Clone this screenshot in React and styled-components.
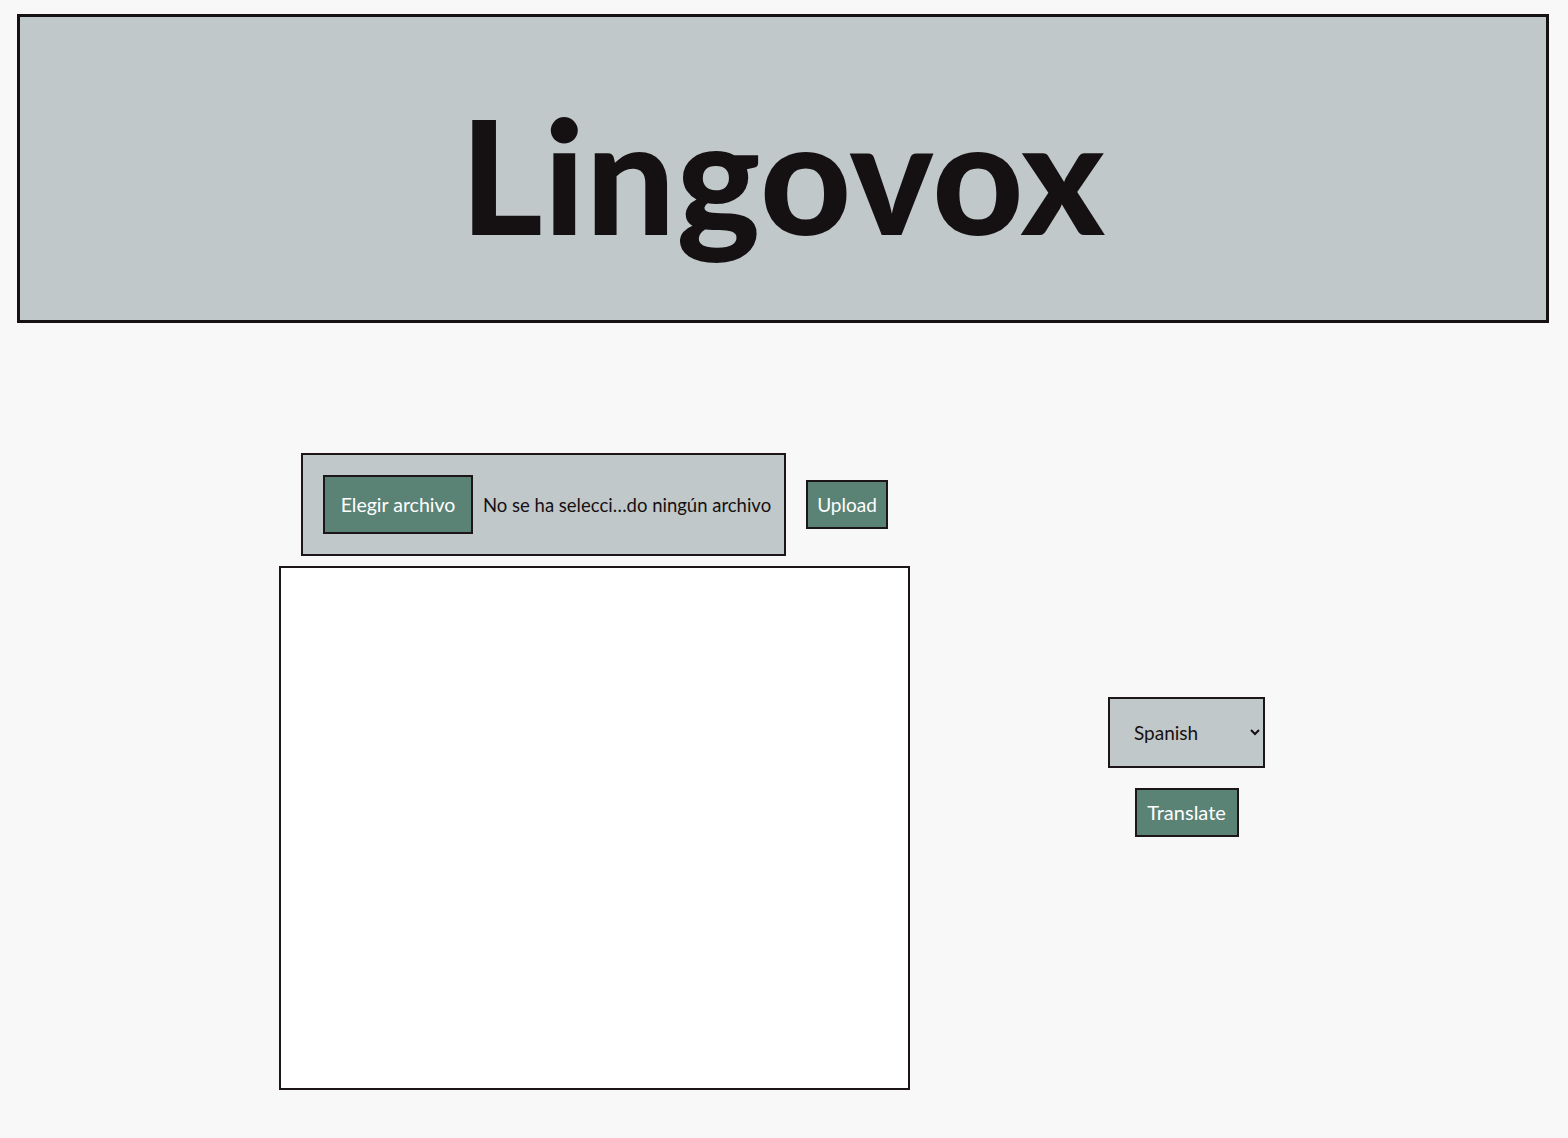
import styled, { createGlobalStyle } from "styled-components";

const GlobalStyle = createGlobalStyle`
    body{
        margin:0;
        background:#f8f8f8;
        font-family: "Comic Sans MS", "Lato", sans-serif;
        color:#151012;
    }
`;

const Header = styled.header`
    height:309px;
    box-sizing:border-box;
    margin:14px 19px 0 17px;
    border:3px solid #161113;
    background:#c1c8c9;
    display:flex;
    align-items:center;
    justify-content:center;

    h1{
        margin:10px 0 0;
        font-size:158px;
        font-weight:900;
        line-height:1;
        letter-spacing:1px;
    }
`;

const Main = styled.main`
    display:flex;
    align-items:center;
    gap:198px;
    margin-top:130px;
    padding-left:279px;
`;

const Column = styled.div`
    display:flex;
    flex-direction:column;
    align-items:center;
    gap:${props => props.gap || "10px"};
    margin-bottom:${props => props.lift || "0"};
`;

const UploadRow = styled.div`
    display:flex;
    align-items:center;
    gap:20px;
`;

const FileBox = styled.div`
    display:flex;
    align-items:center;
    gap:10px;
    width:485px;
    height:103px;
    box-sizing:border-box;
    padding:0 20px;
    border:2px solid #1c1618;
    background:#c1c8c9;
    font-size:18.5px;
`;

const Button = styled.button`
    flex-shrink:0;
    box-sizing:border-box;
    width:${props => props.w};
    height:${props => props.h};
    padding:0;
    border:2px solid #1c1618;
    background:#5a8275;
    color:#fff;
    font-family:inherit;
    font-size:${props => props.fs || "19px"};
    cursor:pointer;
`;

const FileName = styled.span`
    flex-shrink:0;
    white-space:nowrap;
`;

const TextBox = styled.textarea`
    display:block;
    width:631px;
    height:524px;
    box-sizing:border-box;
    border:2px solid #1c1618;
    background:#fff;
    resize:none;
    font-family:inherit;
`;

const Select = styled.select`
    width:157px;
    height:71px;
    box-sizing:border-box;
    padding:0 8px 0 20px;
    border:2px solid #1c1618;
    border-radius:0;
    background:#c1c8c9;
    color:#151012;
    font-family:inherit;
    font-size:19px;
`;

export default function App(){
    return (
        <>
            <GlobalStyle/>
            <Header>
                <h1>Lingovox</h1>
            </Header>
            <Main>
                <Column>
                    <UploadRow>
                        <FileBox>
                            <Button w="150px" h="59px" fs="19.5px">Elegir archivo</Button>
                            <FileName>No se ha selecci…do ningún archivo</FileName>
                        </FileBox>
                        <Button w="82px" h="49px">Upload</Button>
                    </UploadRow>
                    <TextBox/>
                </Column>
                <Column gap="20px" lift="10px">
                    <Select defaultValue="es">
                        <option value="es">Spanish</option>
                        <option value="en">English</option>
                        <option value="fr">French</option>
                    </Select>
                    <Button w="104px" h="49px" fs="20px">Translate</Button>
                </Column>
            </Main>
        </>
    );
}
